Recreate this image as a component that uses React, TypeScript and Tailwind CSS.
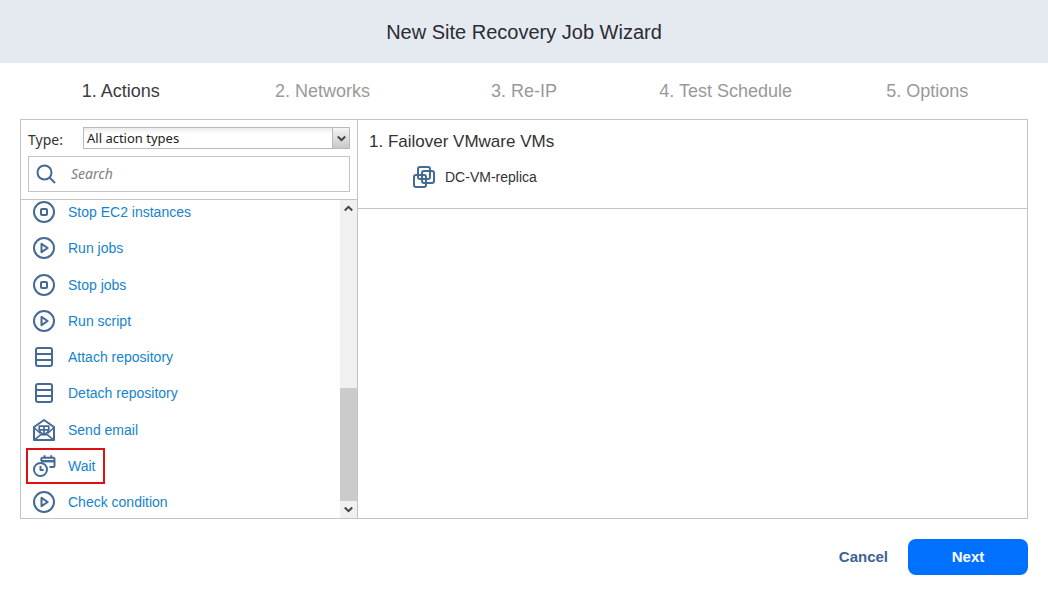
import type { ReactNode } from "react";

type IconName = "stop" | "play" | "repository" | "mail" | "wait";

const steps = ["1. Actions", "2. Networks", "3. Re-IP", "4. Test Schedule", "5. Options"];

const actions: { label: string; icon: IconName; highlighted?: boolean }[] = [
  { label: "Stop EC2 instances", icon: "stop" },
  { label: "Run jobs", icon: "play" },
  { label: "Stop jobs", icon: "stop" },
  { label: "Run script", icon: "play" },
  { label: "Attach repository", icon: "repository" },
  { label: "Detach repository", icon: "repository" },
  { label: "Send email", icon: "mail" },
  { label: "Wait", icon: "wait", highlighted: true },
  { label: "Check condition", icon: "play" },
];

const shapes: Record<IconName, ReactNode> = {
  stop: (
    <>
      <circle cx="12" cy="12" r="10" />
      <rect x="9" y="9" width="6" height="6" rx="1" />
    </>
  ),
  play: (
    <>
      <circle cx="12" cy="12" r="10" />
      <path d="M9.5 7.8v8.4l6.2-4.2z" />
    </>
  ),
  repository: (
    <>
      <rect x="4" y="3" width="16" height="18" rx="2" />
      <path d="M4 9h16M4 15h16" />
    </>
  ),
  mail: (
    <>
      <path d="M2 9v13h20V9L12 2z" />
      <path d="M2 9.5l6.5 6M22 9.5l-6.5 6M2.5 21.8l6-5h7l6 5" strokeWidth="1.6" />
      <path d="M7.2 8.2h9.6v3.4c0 2.4-2.4 3.9-4.8 5-2.4-1.1-4.8-2.6-4.8-5zM12 8v8.5M7.2 11.8h9.6" strokeWidth="1.7" />
    </>
  ),
  wait: (
    <>
      <circle cx="8.5" cy="15.5" r="6.5" />
      <path d="M8.5 12v4h3.2" />
      <path d="M9.3 7V5c0-.8.5-1.3 1.3-1.3h10.6c.8 0 1.3.5 1.3 1.3v6.7c0 .8-.5 1.3-1.3 1.3H17.5M12.6 1.2v3M19.2 1.2v3" />
      <path d="M9 7.2h13.5" strokeWidth="2.4" />
    </>
  ),
};

function ActionIcon({ name }: { name: IconName }) {
  return (
    <svg className="w-6 h-6 shrink-0" viewBox="0 0 24 24" fill="none" stroke="#456a96" strokeWidth="2" strokeLinejoin="round" aria-hidden="true">
      {shapes[name]}
    </svg>
  );
}

function Chevron({ up = false }: { up?: boolean }) {
  return (
    <svg className="w-[9px] h-[7px]" viewBox="0 0 9 7" fill="none" stroke="#444" strokeWidth="2" aria-hidden="true">
      <path d={up ? "M.8 5.5l3.7-3.7 3.7 3.7" : "M.8 1.5l3.7 3.7 3.7-3.7"} />
    </svg>
  );
}

function ActionPicker() {
  return (
    <section className="w-[337px] shrink-0 flex flex-col border-r border-[#c4c4c4]">
      <div className="p-[7px] border-b border-[#c4c4c4]">
        <div className="flex items-center h-[22px] font-['Noto_Sans',sans-serif]">
          <label htmlFor="type" className="w-[55px] pt-1 text-[14px] leading-[18px] text-[#333]">Type:</label>
          <div className="relative flex-1 h-[22px]">
            <select
              id="type"
              className="block appearance-none w-full h-full pl-[3px] pr-5 border border-[#b5b8c8] bg-linear-to-b from-[#ececec] to-white to-30% text-[13px] leading-[18px] text-[#222]"
            >
              <option>All action types</option>
            </select>
            <span className="absolute right-0 inset-y-0 w-[18px] flex items-center justify-center border border-[#b5b8c8] bg-linear-to-b from-[#f5f5f5] to-[#c8c8c8] pointer-events-none">
              <Chevron />
            </span>
          </div>
        </div>
        <div className="mt-[7px] flex items-center gap-[15px] h-9 px-[7px] border border-[#c4c4c4]">
          <svg className="w-5 h-5 shrink-0" viewBox="0 0 20 20" fill="none" stroke="#456a96" strokeWidth="2" aria-hidden="true">
            <circle cx="8.5" cy="8.5" r="7" />
            <path d="M13.5 13.5l5.5 5.5" />
          </svg>
          <input
            type="text"
            aria-label="Search"
            placeholder="Search"
            className="flex-1 min-w-0 font-['Noto_Sans',sans-serif] text-[14px] leading-[18px] italic outline-none placeholder:text-[#808080]"
          />
        </div>
      </div>

      <div className="flex-1 flex">
        <ul className="flex-1 flex flex-col justify-between pl-[11px] pb-1">
          {actions.map((action, i) => (
            <li key={i} className="flex h-6">
              <button
                type="button"
                className={`flex items-center gap-3 pr-1 text-[14px] leading-[18px] text-[#1583cc] ${
                  action.highlighted ? "outline-2 outline-offset-4 outline-[#dd1111]" : ""
                }`}
              >
                <ActionIcon name={action.icon} />
                {action.label}
              </button>
            </li>
          ))}
        </ul>
        <div className="w-[17px] flex flex-col bg-[#f0f0f0]">
          <button type="button" aria-label="Scroll up" className="h-[17px] flex items-center justify-center">
            <Chevron up />
          </button>
          <div className="flex-1" />
          <div className="h-[113px] bg-[#cbcbcb]" />
          <button type="button" aria-label="Scroll down" className="h-[17px] flex items-center justify-center">
            <Chevron />
          </button>
        </div>
      </div>
    </section>
  );
}

function JobPlan() {
  return (
    <section className="flex-1 min-w-0">
      <div className="h-[89px] pl-[11px] pt-3 border-b border-[#c4c4c4]">
        <h2 className="text-[17px] leading-5 text-[#333]">1. Failover VMware VMs</h2>
        <div className="mt-[13px] pl-[43px] flex items-center gap-[9px] text-[14px] leading-[18px] text-[#333]">
          <svg className="w-6 h-6" viewBox="0 0 24 24" fill="none" stroke="#456a96" strokeWidth="2" aria-hidden="true">
            <rect x="6" y="2" width="12" height="12" rx="2" />
            <rect x="10" y="6" width="12" height="12" rx="2" />
            <rect x="2" y="10" width="12" height="12" rx="2" />
          </svg>
          DC-VM-replica
        </div>
      </div>
    </section>
  );
}

export default function App() {
  return (
    <div className="min-h-screen flex flex-col bg-white font-['Liberation_Sans',Arial,sans-serif]">
      <header className="h-[63px] flex items-center justify-center bg-[#e5e9f0]">
        <h1 className="text-[20px] leading-6 text-[#2b2b33]">New Site Recovery Job Wizard</h1>
      </header>

      <nav className="px-5">
        <ol className="grid grid-cols-5 h-14 items-center text-center text-[18px] leading-6">
          {steps.map((step, i) => (
            <li key={step} aria-current={i === 0 ? "step" : undefined} className={i === 0 ? "text-[#3c3c3c]" : "text-[#999]"}>
              {step}
            </li>
          ))}
        </ol>
      </nav>

      <main className="flex-1 flex mx-5 border border-[#c4c4c4]">
        <ActionPicker />
        <JobPlan />
      </main>

      <footer className="flex justify-end items-center gap-5 p-5 text-[15px] leading-5 font-bold">
        <button type="button" className="text-[#3d6493]">Cancel</button>
        <button type="button" className="w-[120px] h-9 rounded-lg bg-[#0070ff] text-white">Next</button>
      </footer>
    </div>
  );
}
